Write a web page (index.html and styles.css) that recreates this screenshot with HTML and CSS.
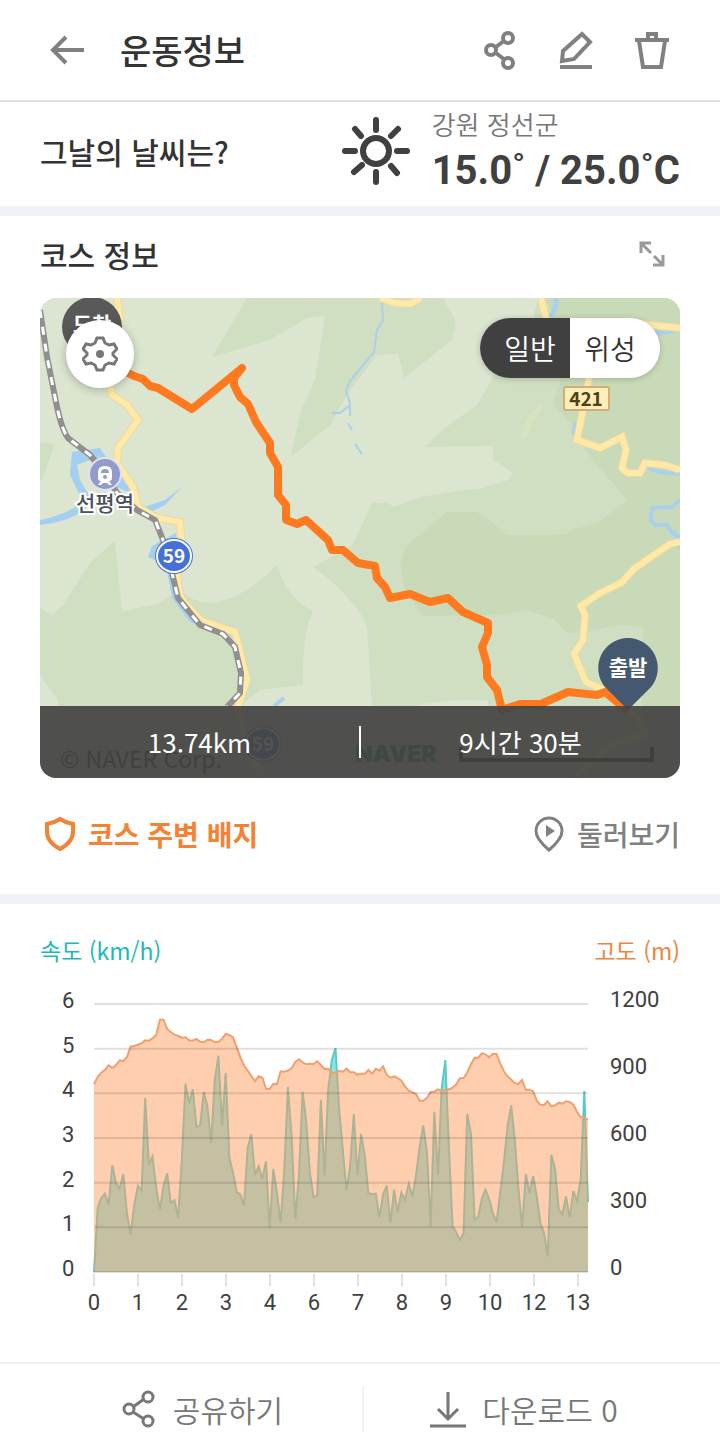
FILE: index.html
```html
<!DOCTYPE html>
<html lang="ko">

<head>
    <meta charset="UTF-8">
    <meta name="viewport" content="width=device-width, initial-scale=1.0">
    <title>운동정보</title>
    <link rel="stylesheet" href="styles.css">
</head>

<body>
    <header class="topbar">
        <button class="icon-btn" aria-label="뒤로">
            <svg width="36" height="40" viewBox="0 0 36 40" class="icon"><path d="M37 20H5M18 7L5 20l13 13" stroke-width="4"/></svg>
        </button>
        <h1>운동정보</h1>
        <button class="icon-btn" aria-label="공유">
            <svg width="40" height="40" viewBox="0 0 40 40" class="icon"><path d="M16 17l9-7M16 23l9 7"/><circle cx="11" cy="20" r="5"/><circle cx="28" cy="8" r="5"/><circle cx="28" cy="33" r="5"/></svg>
        </button>
        <button class="icon-btn" aria-label="수정">
            <svg width="40" height="40" viewBox="0 0 40 40" class="icon"><path d="M6 31l1-10L26 4l8 8-16 17zM4 37h32" stroke-width="4"/></svg>
        </button>
        <button class="icon-btn" aria-label="삭제">
            <svg width="40" height="40" viewBox="0 0 40 40" class="icon"><path d="M3 10h34M7 11l4 26h18l4-26M16 9V4h8v5" stroke-width="4"/></svg>
        </button>
    </header>

    <main>
        <section class="weather">
            <h2>그날의 날씨는?</h2>
            <svg width="70" height="70" viewBox="0 0 70 70" class="sun"><circle cx="35" cy="35" r="13"/><path d="M35 4v10M35 56v10M4 35h10M56 35h10M14 13l6 7M50 20l7-7M13 56l8-7M50 50l6 7"/></svg>
            <div class="weather-info">
                <p class="region">강원 정선군</p>
                <p class="temp">15.0˚ / 25.0˚C</p>
            </div>
        </section>

        <section class="course">
            <div class="course-head">
                <h2>코스 정보</h2>
                <button class="icon-btn expand" aria-label="크게 보기">
                    <svg width="28" height="28" viewBox="0 0 28 28" class="icon"><path d="M3 13V3h10M3 3l10 10M25 15v10H15M25 25l-9-9" stroke-width="3"/></svg>
                </button>
            </div>

            <div class="map">
                <svg class="map-canvas" viewBox="40 298 640 480">
                    <defs>
                        <g id="roads">
                            <path d="M117 298L120 320L110 387L112 395L127 405L138 420L118 448L117 463L133 487L138 507L157 518L180 522L182 550L177 577L180 597L200 620L235 632L247 680L238 707L248 750L262 778"/>
                            <path d="M380 298L395 303L410 304L421 298"/>
                            <path d="M541 298L546 318L589 378L582 415L577 440L600 448L622 437L626 450L622 468L628 473H640L645 463L665 465L680 470"/>
                            <path d="M640 324L680 328"/>
                            <path d="M680 542L670 544L635 568L621 583L600 593L581 606L585 615L583 640L574 654L586 682L600 688L640 720L645 735L610 745L575 778"/>
                        </g>
                        <path id="rail" d="M40 310L47 357L57 407Q62 430 68 438L90 455L105 473L117 493L137 510L155 520L163 540L173 577L178 598L200 625L223 634L235 647L241 673L240 693L227 707"/>
                    </defs>
                    <rect class="land" x="40" y="298" width="640" height="480"/>
                    <!-- forest -->
                    <g class="forest">
                        <path d="M247 298L212 357L270 340L307 318L325 316L315 380L300 413L291 457L330 425L348 393L377 355L398 354L404 378L452 340L456 322L443 298Z"/>
                        <path d="M538 298L533 320L493 377L477 405L442 430L425 447L493 446V460L513 473L508 480L480 489L463 490L420 497L394 507L388 503H372L355 540L350 547L313 567Q330 578 347 597Q362 612 367 627L372 706V778H680V298Z"/>
                        <path d="M40 608L52 615L63 605L90 563L115 541L122 611L158 604L180 590Q197 606 217 602Q245 597 277 565Q288 600 313 611Q302 635 303 685L260 690L240 706L230 778H58V700L40 675Z"/>
                        <path d="M40 442L55 444L42 480H40Z"/>
                    </g>
                    <path class="forest-deep" d="M545 298L570 350L553 403L570 423L587 453L627 500L597 523L553 535H507L493 523L477 512H447L407 545L400 563L405 590L423 616L500 615L525 610L553 618L567 633H583L617 625L643 627L641 778H680V298Z"/>
                    <path class="forest" d="M502 530L530 522L570 530L568 534L510 534Z"/>
                    <path class="grove" d="M541 404L529 415L518 440L526 438L532 425L542 408Z"/>
                    <path class="land" d="M415 706Q450 698 488 701V710H415Z"/>

                    <!-- water -->
                    <g class="water">
                        <path d="M72 452L100 448L112 466L135 490L128 492L105 482L90 460L77 465L80 480L92 500L85 506L70 475Z"/>
                        <path d="M40 520Q65 515 78 505L90 500L85 510Q65 523 40 525Z"/>
                        <path d="M135 510L165 500L182 487L165 505L145 515Z"/>
                        <path d="M148 557L152 546L176 533L178 550L172 580L182 605L198 624L190 622L172 598L166 565Z"/>
                    </g>
                    <g class="stream">
                        <path d="M382 303L383 320L377 330L374 352L350 381L346 391L350 403V416M350 405L340 413H332M348 423L352 430M355 444L362 454"/>
                        <path stroke-width="5" d="M556 298Q557 310 547 320"/>
                        <path stroke-width="4" d="M655 331Q665 335 680 328M576 422L573 435M648 468Q660 474 680 473M680 500L672 507L652 508L651 520L655 525H667L672 533L680 537M674 530L680 548M274 706L284 698"/>
                    </g>

                    <!-- roads and railway -->
                    <use href="#roads" class="road-edge"/>
                    <use href="#roads" class="road"/>
                    <use href="#rail" class="rail"/>
                    <use href="#rail" class="rail-dash"/>

                    <!-- labels on the map -->
                    <circle class="station" cx="105" cy="474" r="16"/>
                    <path fill="#fff" d="M98 478V472Q98 466 105 466Q112 466 112 472V478Q112 481 109 481L112 485H109L107 483H103L101 485H98L101 481Q98 481 98 478Z"/>
                    <path fill="#929bc9" d="M101 473Q101 469 105 469Q109 469 109 473Z"/>
                    <circle fill="#929bc9" cx="105" cy="477" r="2"/>
                    <text class="station-name" x="105" y="511">선평역</text>
                    <ellipse class="shield-edge" cx="174" cy="556" rx="19" ry="18"/>
                    <ellipse class="shield" cx="174" cy="556" rx="17" ry="16"/>
                    <text class="shield-no" x="174" y="563">59</text>
                    <ellipse class="shield-edge" cx="263" cy="744" rx="19" ry="18"/>
                    <ellipse class="shield" cx="263" cy="744" rx="17" ry="16"/>
                    <text class="shield-no" x="263" y="751">59</text>
                    <rect class="plate" x="564" y="387" width="45" height="23" rx="2"/>
                    <text class="plate-no" x="586" y="406">421</text>
                    <text class="copyright" x="60" y="768">© NAVER Corp.</text>
                    <text class="naver" x="355" y="762">NAVER</text>
                    <path class="scale" d="M461 747V760H652V747"/>

                    <!-- course -->
                    <path class="route" d="M128 373L134 376L143 379L150 386L158 388L192 409L242 368L234 378L234 385L240 397L248 404L256 422L270 443V453L278 467V495L286 505V520L297 524L306 520L328 540L332 550H343L358 563L375 566L377 578L385 587L390 598L410 594L430 602L448 598L463 612L488 623L488 633L482 647L487 665V677L497 690L502 710L520 704H541L568 692L597 695L605 692L628 711"/>
                    <path fill="#595959" d="M62 327A30 30 0 0 1 122 327Q122 345 110 350L92 368L72 348Q62 340 62 327Z"/>
                    <text class="pin-text" x="92" y="332">도착</text>
                    <path fill="#445970" d="M628 638A30 30 0 0 1 651 687L628 710L605 687A30 30 0 0 1 628 638Z"/>
                    <text class="pin-text" x="628" y="675">출발</text>
                </svg>

                <button class="map-setting" aria-label="지도 설정">
                    <svg width="36" height="36" viewBox="0 0 36 36" class="icon"><path stroke-width="3" d="M15 2h6l2 5 4 2 5-1 3 5-4 4v2l4 4-3 5-5-1-4 2-2 5h-6l-2-5-4-2-5 1-3-5 4-4v-2l-4-4 3-5 5 1 4-2z"/><circle cx="18" cy="18" r="4" class="dot"/></svg>
                </button>
                <div class="map-type">
                    <button class="active" aria-pressed="true">일반</button>
                    <button aria-pressed="false">위성</button>
                </div>
                <div class="map-summary">
                    <span>13.74km</span>
                    <span>9시간 30분</span>
                </div>
            </div>

            <div class="course-links">
                <a href="#" class="badge-link">
                    <svg width="40" height="40" viewBox="0 0 40 40" class="icon"><path d="M20 5Q26 9 33 10V18Q33 28 20 35Q7 28 7 18V10Q14 9 20 5Z"/></svg>
                    코스 주변 배지
                </a>
                <a href="#" class="tour-link">
                    <svg width="40" height="40" viewBox="0 0 40 40" class="icon"><path stroke-width="3" d="M20 36Q7 25 7 17A13 13 0 0 1 33 17Q33 25 20 36Z"/><path class="dot" d="M17 11l9 6-9 6z"/></svg>
                    둘러보기
                </a>
            </div>
        </section>

        <section class="graph">
            <div class="graph-head">
                <span class="speed-label">속도 (km/h)</span>
                <span class="height-label">고도 (m)</span>
            </div>
            <svg class="chart" viewBox="0 0 640 340">
                <g transform="translate(54 16)">
                    <polygon id="speed-area" class="speed-area"/>
                    <polyline id="speed-line" class="speed-line"/>
                    <polygon id="height-area" class="height-area"/>
                    <polyline id="height-line" class="height-line"/>
                </g>
                <g id="grid"></g>
                <g id="labels"></g>
            </svg>
        </section>
    </main>

    <footer class="bottombar">
        <button>
            <svg width="36" height="40" viewBox="0 0 36 40" class="icon"><path d="M12 18l11-8M12 23l11 7"/><circle cx="8" cy="20" r="5"/><circle cx="27" cy="8" r="5"/><circle cx="27" cy="32" r="5"/></svg>
            공유하기
        </button>
        <button>
            <svg width="36" height="40" viewBox="0 0 36 40" class="icon"><path d="M18 3v26M8 20l10 10 10-10M0 37h36"/></svg>
            다운로드 0
        </button>
    </footer>
    <script src="script.js"></script>
</body>

</html>
```
FILE: styles.css
```css
* {
    box-sizing: border-box;
}

body {
    margin: 0;
    font-family: "Noto Sans CJK KR", sans-serif;
    color: #333;
    background-color: #fff;
}

h1,
h2,
p {
    margin: 0;
    font-weight: 500;
}

h1 {
    flex: 1;
    font-size: 34px;
    line-height: 48px;
}

h2 {
    font-size: 30px;
    line-height: 40px;
}

button {
    padding: 0;
    border: 0;
    background: none;
    font-family: inherit;
    color: inherit;
    cursor: pointer;
}

a {
    text-decoration: none;
}

svg {
    display: block;
}

.icon {
    fill: none;
    stroke: currentColor;
    stroke-width: 4;
}

.icon .dot {
    fill: currentColor;
    stroke: none;
}

.topbar {
    display: flex;
    align-items: center;
    gap: 36px;
    height: 102px;
    padding: 0 48px;
    border-bottom: 2px solid #e2e2e2;
}

.icon-btn {
    color: #808080;
}

/* weather */

.weather {
    display: flex;
    align-items: center;
    height: 114px;
    padding: 0 40px 6px;
    border-bottom: 10px solid #eff3f6;
}

.weather h2 {
    flex: 1;
}

.sun {
    fill: none;
    stroke: #404040;
    stroke-width: 6;
    stroke-linecap: round;
}

.weather-info {
    padding-left: 21px;
}

.region {
    font-size: 26px;
    line-height: 40px;
    font-weight: 350;
    color: #777;
}

.temp {
    font-family: Roboto, "Noto Sans CJK KR", sans-serif;
    font-size: 40px;
    line-height: 54px;
    font-weight: 700;
    color: #404040;
}

/* course */

.course {
    padding: 18px 40px 40px;
    border-bottom: 10px solid #eff3f6;
}

.course-head {
    display: flex;
    justify-content: space-between;
    align-items: center;
    padding-bottom: 24px;
}

.expand {
    padding-right: 14px;
    color: #999;
}

.map {
    position: relative;
    overflow: hidden;
    border-radius: 16px;
}

.map-canvas {
    width: 100%;
    height: auto;
}

.land {
    fill: #dbe5cf;
}

.forest {
    fill: #d0dfc2;
}

.forest-deep {
    fill: #c8dab8;
}

.grove {
    fill: #d5e3bf;
}

.water {
    fill: #a4cff0;
}

.stream {
    fill: none;
    stroke: #a9d0ed;
    stroke-width: 2;
}

.road-edge {
    fill: none;
    stroke: #ecd9a0;
    stroke-width: 8;
}

.road {
    fill: none;
    stroke: #ffe9a8;
    stroke-width: 6;
}

.rail {
    fill: none;
    stroke: #8f8f8f;
    stroke-width: 6;
}

.rail-dash {
    fill: none;
    stroke: #fff;
    stroke-width: 3;
    stroke-dasharray: 8 9;
}

.station {
    fill: #929bc9;
    stroke: #dfe3f0;
    stroke-width: 2;
}

.map-canvas text {
    text-anchor: middle;
    font-weight: 700;
}

.map-canvas .station-name {
    font-size: 21px;
    font-weight: 500;
    fill: #49505e;
    stroke: #fff;
    stroke-width: 4;
    paint-order: stroke;
}

.shield-edge {
    fill: #4471d9;
}

.shield {
    fill: #4471d9;
    stroke: #fff;
    stroke-width: 2;
}

.shield-no {
    font-size: 19px;
    fill: #fff;
}

.plate {
    fill: #ffeeb8;
    stroke: #d2ae76;
    stroke-width: 2;
}

.plate-no {
    font-size: 19px;
    fill: #544016;
}

.map-canvas .copyright {
    font-size: 23px;
    font-weight: 400;
    text-anchor: start;
    fill: #222;
}

.map-canvas .naver {
    font-family: Inter, sans-serif;
    font-size: 23px;
    font-weight: 900;
    text-anchor: start;
    fill: #008f4a;
}

.scale {
    fill: none;
    stroke: #111;
    stroke-width: 4;
}

.route {
    fill: none;
    stroke: #ff7a1f;
    stroke-width: 8;
    stroke-linejoin: round;
}

.pin-text {
    font-size: 21px;
    fill: #fff;
}

.map-setting {
    position: absolute;
    top: 22px;
    left: 26px;
    display: flex;
    justify-content: center;
    align-items: center;
    width: 68px;
    height: 68px;
    border-radius: 50%;
    background: #fff;
    color: #777;
    box-shadow: 0 2px 10px rgba(0, 0, 0, 0.25);
}

.map-type {
    position: absolute;
    top: 20px;
    right: 20px;
    display: flex;
    overflow: hidden;
    border-radius: 30px;
    background: #fff;
    box-shadow: 0 1px 6px rgba(0, 0, 0, 0.2);
}

.map-type button {
    width: 90px;
    height: 60px;
    padding-right: 10px;
    font-size: 28px;
    line-height: 60px;
    font-weight: 350;
}

.map-type .active {
    padding: 0 0 0 10px;
    background: #404040;
    color: #fff;
}

.map-summary {
    position: absolute;
    right: 0;
    bottom: 0;
    left: 0;
    display: flex;
    padding: 20px 0;
    background: rgba(67, 67, 66, 0.92);
    color: #fff;
    font-size: 26px;
    line-height: 32px;
}

.map-summary span {
    flex: 1;
    text-align: center;
}

.map-summary span + span {
    border-left: 2px solid #fff;
}

.course-links {
    display: flex;
    justify-content: space-between;
    padding-top: 36px;
    font-size: 28px;
    line-height: 40px;
}

.course-links a {
    display: flex;
    align-items: center;
    gap: 8px;
}

.badge-link {
    font-weight: 700;
    color: #f58233;
}

.tour-link {
    font-weight: 500;
    color: #808080;
}

/* graph */

.graph {
    padding: 28px 40px 34px;
}

.graph-head {
    display: flex;
    justify-content: space-between;
    padding-bottom: 20px;
    font-size: 23px;
    line-height: 36px;
}

.speed-label {
    color: #1cb9bb;
}

.height-label {
    color: #f0843c;
}

.chart {
    width: 100%;
    height: auto;
    font-family: Roboto, sans-serif;
    font-size: 22px;
    fill: #404040;
}

.chart line {
    stroke: #000;
    stroke-opacity: 0.12;
    stroke-width: 2;
}

.chart .x-label {
    text-anchor: middle;
}

.speed-area {
    fill: #8be3e3;
}

.speed-line {
    fill: none;
    stroke: #5cc9c8;
    stroke-width: 2;
}

.height-area {
    fill: #ff9d5f;
    fill-opacity: 0.5;
}

.height-line {
    fill: none;
    stroke: #f0a070;
    stroke-width: 2;
}

/* bottom bar */

.bottombar {
    display: flex;
    height: 92px;
    padding: 22px 36px 22px 42px;
    border-top: 2px solid #f0f0f0;
}

.bottombar button {
    flex: 1;
    display: flex;
    justify-content: center;
    align-items: center;
    gap: 16px;
    font-size: 30px;
    line-height: 46px;
    font-weight: 350;
    color: #777;
}

.bottombar .icon {
    stroke-width: 3;
}

.bottombar button + button {
    border-left: 2px solid #f3f3f3;
}
```
FILE: script.js
```js
const plotHeight = 268;
const plotWidth = 494;
const plotTop = 16;

// depth of each sample below the top of the plot, in thirds of a pixel
const heights = [283, 262, 249, 240, 227, 235, 226, 212, 214, 203, 171, 169, 165, 161, 152, 153, 146, 136, 90, 90,
  118, 127, 135, 139, 144, 143, 152, 153, 148, 156, 158, 150, 151, 158, 156, 147, 133, 136, 143, 173,
  203, 227, 243, 258, 275, 260, 264, 297, 298, 282, 283, 245, 246, 243, 236, 217, 209, 218, 224, 222,
  223, 215, 226, 238, 237, 249, 249, 244, 246, 237, 248, 248, 255, 252, 252, 241, 252, 237, 243, 230,
  255, 264, 260, 265, 273, 290, 303, 308, 313, 333, 333, 324, 307, 306, 299, 303, 302, 299, 294, 284,
  266, 265, 249, 224, 204, 204, 191, 194, 203, 192, 193, 221, 244, 260, 270, 281, 283, 271, 301, 300,
  305, 333, 345, 346, 335, 350, 347, 339, 342, 335, 337, 345, 366, 382, 384, 391];

const speeds = [848, 655, 625, 612, 645, 527, 580, 597, 553, 670, 735, 645, 588, 604, 325, 525, 500, 595, 660, 590,
  551, 640, 632, 684, 510, 282, 340, 299, 412, 406, 306, 350, 460, 270, 198, 408, 250, 505, 550, 607,
  614, 648, 475, 434, 556, 530, 568, 515, 716, 538, 610, 700, 540, 292, 440, 688, 560, 306, 395, 550,
  622, 618, 330, 558, 300, 210, 176, 360, 480, 602, 530, 373, 556, 433, 500, 611, 614, 612, 684, 614,
  588, 700, 600, 667, 609, 632, 583, 620, 558, 470, 407, 490, 710, 366, 556, 300, 211, 470, 710, 728,
  752, 730, 373, 430, 690, 682, 626, 600, 628, 670, 698, 610, 520, 410, 347, 450, 600, 712, 553, 610,
  559, 620, 700, 730, 800, 495, 538, 658, 675, 620, 684, 604, 634, 570, 304, 638];

function drawSeries(name, samples) {
  const step = plotWidth / (samples.length - 1);
  const points = samples.map((y, i) => `${(i * step).toFixed(1)},${((y - 43) / 3).toFixed(1)}`).join(' ');
  document.getElementById(name + '-line').setAttribute('points', points);
  document.getElementById(name + '-area').setAttribute('points', `0,${plotHeight} ${points} ${plotWidth},${plotHeight}`);
}

function drawAxes() {
  let lines = '';
  let labels = '';
  for (let i = 0; i <= 6; i++) {
    const y = plotTop + i * plotHeight / 6;
    lines += `<line x1="54" x2="548" y1="${y}" y2="${y}"/>`;
    labels += `<text x="22" y="${y + 4}">${6 - i}</text>`;
  }
  [1200, 900, 600, 300, 0].forEach((value, i) => {
    labels += `<text x="570" y="${plotTop + 3 + i * plotHeight / 4}">${value}</text>`;
  });
  [0, 1, 2, 3, 4, 6, 7, 8, 9, 10, 12, 13].forEach((value, i) => {
    const x = 54 + i * 44;
    lines += `<line x1="${x}" x2="${x}" y1="286" y2="298"/>`;
    labels += `<text class="x-label" x="${x}" y="322">${value}</text>`;
  });
  document.getElementById('grid').innerHTML = lines;
  document.getElementById('labels').innerHTML = labels;
}

drawSeries('speed', speeds);
drawSeries('height', heights);
drawAxes();
```
